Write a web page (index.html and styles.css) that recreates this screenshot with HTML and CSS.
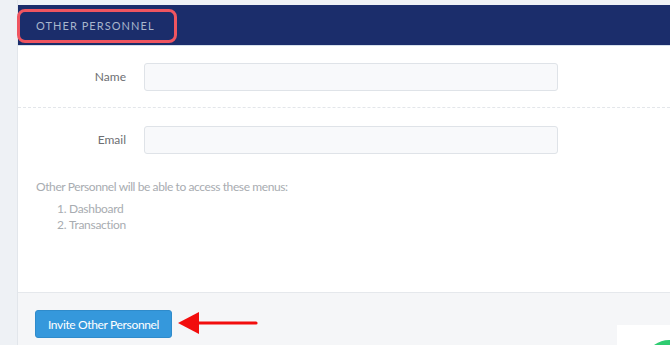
FILE: index.html
```html
<!DOCTYPE html>
<html>
<head>
<meta charset="utf-8">
<link rel="stylesheet" href="styles.css">
</head>
<body>
<div class="page">
  <aside class="rail"></aside>
  <main class="main">
    <section class="panel">
      <header class="panel-head">
        <span class="title-box">OTHER PERSONNEL</span>
      </header>
      <div class="panel-body">
        <div class="row">
          <label class="lbl">Name</label>
          <div class="field"></div>
        </div>
        <div class="row row-sep">
          <label class="lbl">Email</label>
          <div class="field"></div>
        </div>
        <p class="note">Other Personnel will be able to access these menus:</p>
        <ol class="menus">
          <li>Dashboard</li>
          <li>Transaction</li>
        </ol>
      </div>
      <footer class="panel-foot">
        <button class="btn">Invite Other Personnel</button>
        <svg class="arrow" width="80" height="24" viewBox="0 0 80 24">
          <polygon points="0,12 21,1 21,23" fill="#f20d0d"/>
          <line x1="18" y1="12" x2="78" y2="12" stroke="#f20d0d" stroke-width="3.2" stroke-linecap="round"/>
        </svg>
        <div class="corner"><span class="dot"></span></div>
      </footer>
    </section>
  </main>
</div>
</body>
</html>
```
FILE: styles.css
```css
* { box-sizing: border-box; }
html, body { margin: 0; padding: 0; }
body {
  width: 670px; height: 345px; overflow: hidden;
  background: #eff2f6;
  font-family: Lato, "Open Sans", sans-serif;
}
.page { display: flex; height: 345px; }
.rail {
  width: 18px; flex: none;
  background: #eef1f5;
  border-right: 1px solid #e2e6eb;
}
.main { flex: 1; padding-top: 5px; }
.panel { display: flex; flex-direction: column; height: 340px; background: #fff; }
.panel-head {
  height: 41px; background: #1b2d6b;
  border-bottom: 1px solid #d6e0ec;
  display: flex; align-items: center;
}
.title-box {
  margin-left: -1px; margin-top: 1px;
  height: 34px; width: 160px;
  border: 3px solid #ef5560; border-radius: 8px;
  display: flex; align-items: center;
  padding-left: 16px;
  color: #a9b6cc; font-size: 11px; letter-spacing: 1.05px;
}
.panel-body { flex: 1; }
.row {
  display: flex; align-items: center;
  height: 62px;
}
.row:first-child { border-bottom: 1px dashed #e3e6ea; }
.row-sep { height: 63px; }
.lbl {
  width: 108px; text-align: right;
  font-size: 12px; color: #6d6f73;
}
.field {
  margin-left: 18px; width: 414px; height: 28px;
  background: #f8f9fb; border: 1px solid #dfe3e8; border-radius: 3px;
}
.note {
  margin: 8px 0 0 18px;
  font-size: 12px; letter-spacing: -0.4px; color: #a8acb1;
}
.menus {
  margin: 7px 0 0 0; padding-left: 51px;
  font-size: 12px; letter-spacing: -0.3px; color: #a8acb1; line-height: 16px;
}
.panel-foot {
  position: relative;
  height: 53px; background: #f5f6f8;
  border-top: 1px solid #e5e8ec;
  display: flex; align-items: flex-start;
  padding: 17px 0 0 17px;
}
.btn {
  height: 28px; width: 137px;
  background: #3598dc; color: #fff;
  border: 1px solid #2f8bcb; border-radius: 3px;
  font-family: inherit; font-size: 12px; letter-spacing: -0.35px;
  padding: 0;
}
.arrow { margin: 1px 0 0 6px; }
.corner {
  position: absolute; left: 599px; top: 32px;
  width: 60px; height: 30px; background: #fff; overflow: hidden;
}
.dot {
  position: absolute; left: 32px; top: 15px;
  width: 40px; height: 30px; border-radius: 50%;
  background: #2ecc71;
}
```
